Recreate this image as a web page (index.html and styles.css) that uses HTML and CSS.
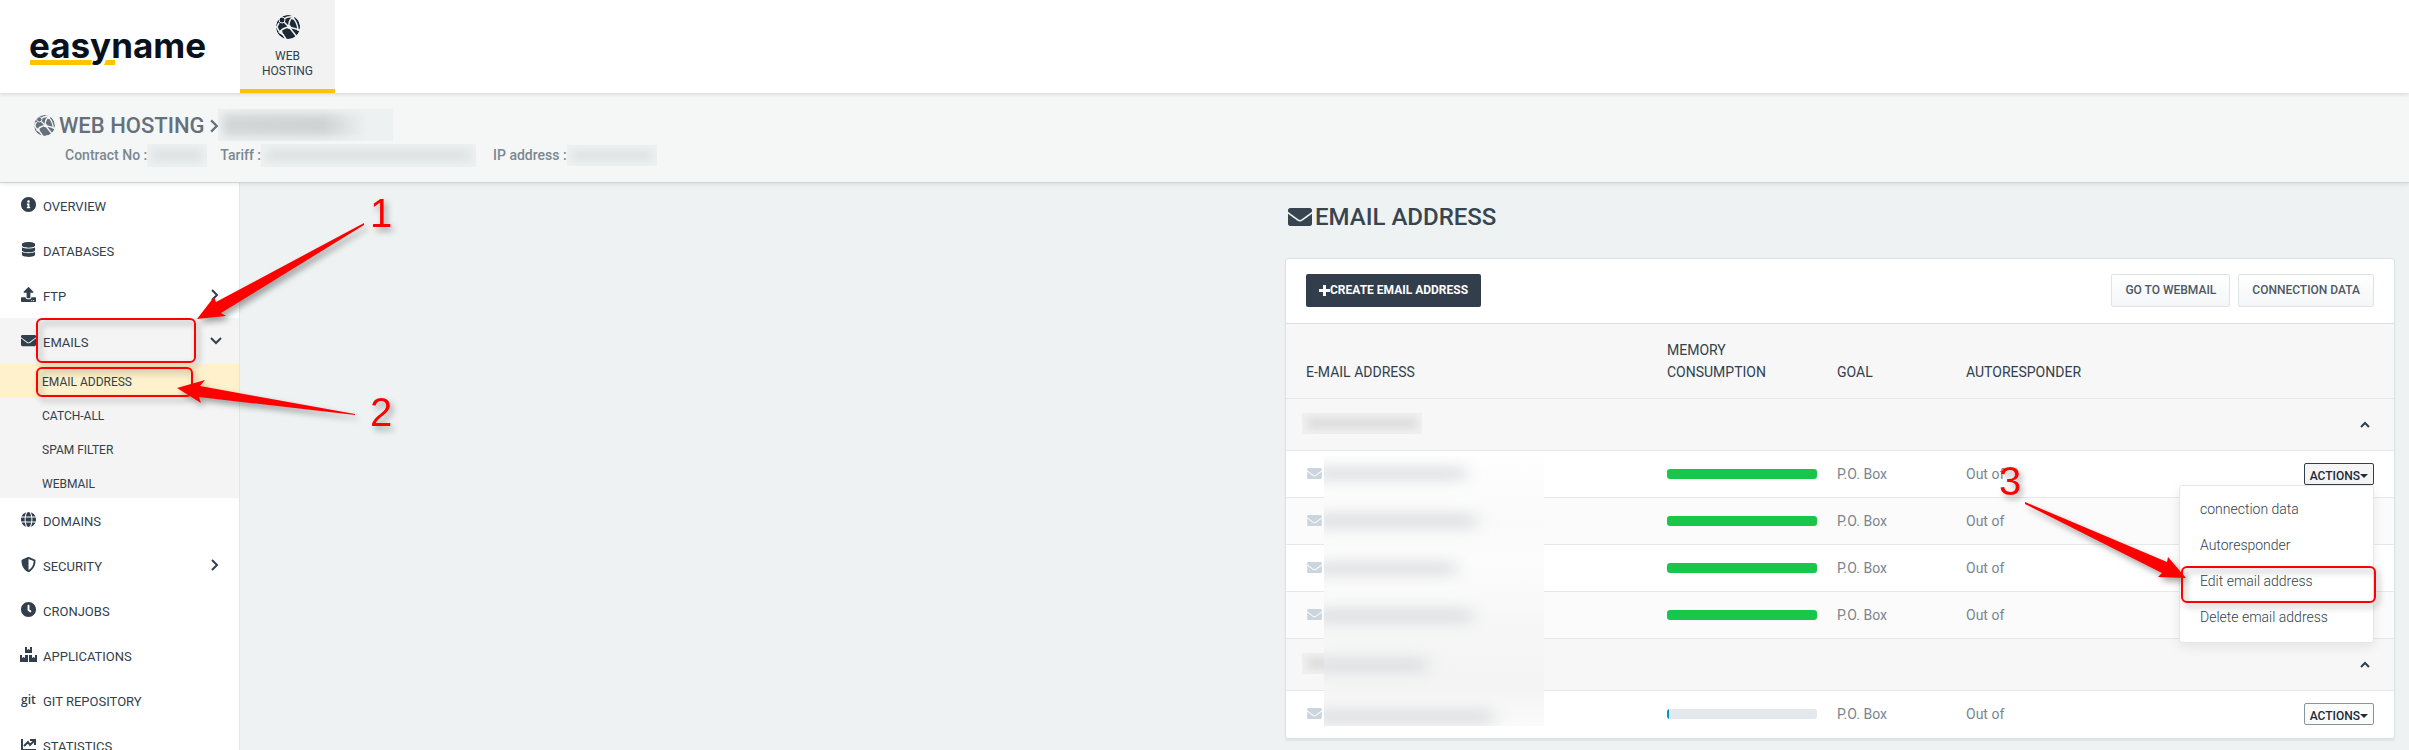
FILE: index.html
```
<!DOCTYPE html>
<html lang="en">

<head>
    <meta charset="utf-8">
    <title>Email address</title>
    <link rel="stylesheet" href="styles.css">
</head>

<body>
    <svg class="sprite" aria-hidden="true">
        <symbol id="envelope" viewBox="0 64 512 384">
            <path d="M502.3 190.8c3.9-3.1 9.7-.2 9.7 4.7V400c0 26.5-21.5 48-48 48H48c-26.5 0-48-21.5-48-48V195.6c0-5 5.7-7.8 9.7-4.7 22.4 17.4 52.1 39.5 154.1 113.6 21.1 15.4 56.7 47.8 92.2 47.6 35.7.3 72-32.8 92.3-47.6 102-74.1 131.6-96.3 154-113.7zM256 320c23.2.4 56.6-29.2 73.4-41.4 132.7-96.3 142.8-104.7 173.4-128.7 5.8-4.5 9.2-11.5 9.2-18.9v-19c0-26.5-21.5-48-48-48H48c-26.5 0-48 21.5-48 48v19c0 7.4 3.4 14.3 9.2 18.9 30.6 23.9 40.7 32.4 173.4 128.7 16.8 12.2 50.2 41.8 73.4 41.4z"/>
        </symbol>
        <symbol id="web" viewBox="0 0 24 24">
            <mask id="net">
                <circle cx="12" cy="12" r="12" fill="#fff"/>
                <path d="M8 4Q12 1 17 2M3 8L0 13M8 7L13 12M18 1Q12 5 13 12M13 12L24 15M13 12Q6 13 3 18M5 17L10 24M13 12L21 22M17 3Q22 8 22 16M1 12Q3 18 8 20" fill="none" stroke="#000" stroke-width="1.500"/>
                <circle cx="6" cy="5" r="3" fill="#fff" stroke="#000"/>
                <circle cx="17" cy="3" r="1.500" fill="#000"/>
                <circle cx="13" cy="12" r="2" fill="#000"/>
                <circle cx="5" cy="17" r="1.500" fill="#000"/>
            </mask>
            <circle cx="12" cy="12" r="12" mask="url(#net)"/>
        </symbol>
        <symbol id="chevron" viewBox="0 0 8 12">
            <path d="M1 1l5 5-5 5" fill="none" stroke="currentColor" stroke-width="2"/>
        </symbol>
        <symbol id="chevron-down" viewBox="0 0 12 8">
            <path d="M1 1l5 5 5-5" fill="none" stroke="currentColor" stroke-width="2"/>
        </symbol>
        <symbol id="chevron-up" viewBox="0 0 10 7">
            <path d="M1 6l4-4 4 4" fill="none" stroke="currentColor" stroke-width="2"/>
        </symbol>
    </svg>

    <header class="topbar">
        <a class="logo" href="#">
            <span class="logo-text">easyname</span>
            <svg class="logo-line" width="86" height="5" viewBox="0 0 86 5"><path d="M0 0h62l-1 5H0zM76 0h9v5H74z"/></svg>
        </a>
        <nav>
            <a class="tab" href="#">
                <svg width="24" height="24"><use href="#web"/></svg>
                WEB<br>HOSTING
            </a>
        </nav>
    </header>

    <section class="contract">
        <div class="contract-title">
            <svg width="21" height="21"><use href="#web"/></svg>
            <span>WEB HOSTING</span>
            <svg class="crumb" width="9" height="14"><use href="#chevron"/></svg>
            <span class="hidden-text hidden-domain"></span>
        </div>
        <div class="contract-info">
            <span>Contract No :</span><span class="hidden-text hidden-no"></span>
            <span>Tariff :</span><span class="hidden-text hidden-tariff"></span>
            <span>IP address :</span><span class="hidden-text hidden-ip"></span>
        </div>
    </section>

    <div class="page">
        <nav class="sidebar">
            <a class="item" href="#">
                <svg class="icon" viewBox="8 8 496 496"><path d="M256 8C119.043 8 8 119.083 8 256c0 136.997 111.043 248 248 248s248-111.003 248-248C504 119.083 392.957 8 256 8zm0 110c23.196 0 42 18.804 42 42s-18.804 42-42 42-42-18.804-42-42 18.804-42 42-42zm56 254c0 6.627-5.373 12-12 12h-88c-6.627 0-12-5.373-12-12v-24c0-6.627 5.373-12 12-12h12v-64h-12c-6.627 0-12-5.373-12-12v-24c0-6.627 5.373-12 12-12h64c6.627 0 12 5.373 12 12v100h12c6.627 0 12 5.373 12 12v24z"/></svg>
                <span>OVERVIEW</span>
            </a>
            <a class="item" href="#">
                <svg class="icon" viewBox="0 0 448 512"><path d="M448 73.143v45.714C448 159.143 347.667 192 224 192S0 159.143 0 118.857V73.143C0 32.857 100.333 0 224 0s224 32.857 224 73.143zM448 176v102.857C448 319.143 347.667 352 224 352S0 319.143 0 278.857V176c48.125 33.143 136.208 48.572 224 48.572S399.874 209.143 448 176zm0 160v102.857C448 479.143 347.667 512 224 512S0 479.143 0 438.857V336c48.125 33.143 136.208 48.572 224 48.572S399.874 369.143 448 336z"/></svg>
                <span>DATABASES</span>
            </a>
            <a class="item" href="#">
                <svg class="icon" viewBox="0 0 512 512"><path d="M296 384h-80c-13.3 0-24-10.7-24-24V192h-87.700c-17.800 0-26.700-21.500-14.100-34.100L242.300 5.700c7.500-7.500 19.800-7.500 27.300 0l152.200 152.200c12.600 12.600 3.700 34.100-14.100 34.100H320v168c0 13.300-10.700 24-24 24zm216-8v112c0 13.300-10.700 24-24 24H24c-13.300 0-24-10.700-24-24V376c0-13.300 10.700-24 24-24h136v8c0 30.900 25.100 56 56 56h80c30.900 0 56-25.100 56-56v-8h136c13.300 0 24 10.700 24 24zm-124 88c0-11-9-20-20-20s-20 9-20 20 9 20 20 20 20-9 20-20zm64 0c0-11-9-20-20-20s-20 9-20 20 9 20 20 20 20-9 20-20z"/></svg>
                <span>FTP</span>
                <svg class="arrow" width="8" height="12"><use href="#chevron"/></svg>
            </a>
            <div class="open">
                <a class="item" href="#">
                    <svg class="icon"><use href="#envelope"/></svg>
                    <span>EMAILS</span>
                    <svg class="arrow down" width="12" height="8"><use href="#chevron-down"/></svg>
                </a>
                <a class="subitem active" href="#">EMAIL ADDRESS</a>
                <a class="subitem" href="#">CATCH-ALL</a>
                <a class="subitem" href="#">SPAM FILTER</a>
                <a class="subitem" href="#">WEBMAIL</a>
            </div>
            <a class="item" href="#">
                <svg class="icon" viewBox="0 8 496 496"><path d="M336.500 160C322 70.700 287.800 8 248 8s-74 62.700-88.500 152h177zM152 256c0 22.200 1.200 43.500 3.300 64h185.300c2.100-20.500 3.300-41.800 3.300-64s-1.200-43.500-3.300-64H155.300c-2.100 20.500-3.300 41.800-3.300 64zm324.700-96c-28.600-67.900-86.500-120.400-158-141.600 24.400 33.800 41.200 84.700 50 141.600h108zM177.200 18.400C105.800 39.600 47.800 92.100 19.300 160h108c8.700-56.900 25.500-107.800 49.900-141.600zM487.400 192H372.700c2.100 21 3.300 42.500 3.300 64s-1.200 43-3.300 64h114.600c5.500-20.500 8.600-41.800 8.600-64s-3.100-43.500-8.500-64zM120 256c0-21.500 1.200-43 3.300-64H8.600C3.200 212.500 0 233.800 0 256s3.200 43.500 8.600 64h114.600c-2-21-3.200-42.500-3.200-64zm39.500 96c14.500 89.300 48.700 152 88.500 152s74-62.700 88.500-152h-177zm159.300 141.600c71.400-21.200 129.400-73.700 158-141.600h-108c-8.800 56.900-25.600 107.800-50 141.600zM19.300 352c28.600 67.900 86.500 120.400 158 141.600-24.400-33.800-41.200-84.700-50-141.600h-108z"/></svg>
                <span>DOMAINS</span>
            </a>
            <a class="item" href="#">
                <svg class="icon" viewBox="0 0 512 512"><path d="M466.500 83.700l-192-80a48.150 48.150 0 0 0-36.900 0l-192 80C27.700 91.100 16 108.600 16 128c0 198.500 114.500 335.700 221.500 380.300 11.800 4.900 25.100 4.900 36.900 0C360.100 472.600 496 349.300 496 128c0-19.400-11.700-36.900-29.500-44.300zM256.100 446.300l-.1-381 175.900 73.300c-3.300 151.400-82.100 261.100-175.800 307.700z"/></svg>
                <span>SECURITY</span>
                <svg class="arrow" width="8" height="12"><use href="#chevron"/></svg>
            </a>
            <a class="item" href="#">
                <svg class="icon" viewBox="8 8 496 496"><path d="M256,8C119,8,8,119,8,256S119,504,256,504,504,393,504,256,393,8,256,8Zm92.490,313h0l-20,25a16,16,0,0,1-22.490,2.500h0l-67-49.720a40,40,0,0,1-15-31.230V112a16,16,0,0,1,16-16h32a16,16,0,0,1,16,16V256l58,42.500A16,16,0,0,1,348.490,321Z"/></svg>
                <span>CRONJOBS</span>
            </a>
            <a class="item" href="#">
                <svg class="icon wide" viewBox="0 0 17 15"><path d="M5 0h2v3l1.500-1L10 3V0h2v6H5zM0 8h2v3l1.500-1L5 11V8h3v7H0zM9 8h3v3l1.500-1 1.500 1V8h2v7H9z"/></svg>
                <span>APPLICATIONS</span>
            </a>
            <a class="item" href="#">
                <span class="icon git">git</span>
                <span>GIT REPOSITORY</span>
            </a>
            <a class="item" href="#">
                <svg class="icon" viewBox="0 0 15 15"><path d="M1 2v11h14M3 9l4-4 2 3 4-4M9 3h5v5" fill="none" stroke="currentColor" stroke-width="2"/></svg>
                <span>STATISTICS</span>
            </a>
        </nav>

        <main class="content">
            <h1><svg width="24" height="18"><use href="#envelope"/></svg>EMAIL ADDRESS</h1>
            <div class="card">
                <div class="toolbar">
                    <button class="btn-dark" type="button"><svg width="11" height="11" viewBox="0 0 11 11"><path d="M4 0h3v4h4v3H7v4H4V7H0V4h4z"/></svg>CREATE EMAIL ADDRESS</button>
                    <div class="toolbar-right">
                        <button class="btn-light" type="button">GO TO WEBMAIL</button>
                        <button class="btn-light" type="button">CONNECTION DATA</button>
                    </div>
                </div>
                <table class="table">
                    <colgroup>
                        <col class="col-mail">
                        <col class="col-memory">
                        <col class="col-goal">
                        <col class="col-auto">
                        <col>
                    </colgroup>
                    <thead>
                        <tr>
                            <th scope="col">E-MAIL ADDRESS</th>
                            <th scope="col">MEMORY CONSUMPTION</th>
                            <th scope="col">GOAL</th>
                            <th scope="col">AUTORESPONDER</th>
                            <th></th>
                        </tr>
                    </thead>
                    <tbody>
                        <tr class="group">
                            <td colspan="4"><span class="hidden-text hidden-group"></span></td>
                            <td><svg class="collapse" width="10" height="7"><use href="#chevron-up"/></svg></td>
                        </tr>
                        <tr>
                            <td><svg class="mail" width="15" height="11"><use href="#envelope"/></svg></td>
                            <td><div class="bar"><div class="bar-fill" style="width: 100%"></div></div></td>
                            <td>P.O. Box</td>
                            <td>Out of</td>
                            <td>
                                <div class="dropdown">
                                    <button class="btn-actions focus" type="button">ACTIONS<svg width="8" height="4" viewBox="0 0 8 4"><path d="M0 0h8L4 4z"/></svg></button>
                                    <div class="menu">
                                        <a href="#">connection data</a>
                                        <a href="#">Autoresponder</a>
                                        <a href="#">Edit email address</a>
                                        <a href="#">Delete email address</a>
                                    </div>
                                </div>
                            </td>
                        </tr>
                        <tr class="even">
                            <td><svg class="mail" width="15" height="11"><use href="#envelope"/></svg></td>
                            <td><div class="bar"><div class="bar-fill" style="width: 100%"></div></div></td>
                            <td>P.O. Box</td>
                            <td>Out of</td>
                            <td></td>
                        </tr>
                        <tr>
                            <td><svg class="mail" width="15" height="11"><use href="#envelope"/></svg></td>
                            <td><div class="bar"><div class="bar-fill" style="width: 100%"></div></div></td>
                            <td>P.O. Box</td>
                            <td>Out of</td>
                            <td></td>
                        </tr>
                        <tr class="even">
                            <td><svg class="mail" width="15" height="11"><use href="#envelope"/></svg></td>
                            <td><div class="bar"><div class="bar-fill" style="width: 100%"></div></div></td>
                            <td>P.O. Box</td>
                            <td>Out of</td>
                            <td></td>
                        </tr>
                        <tr class="group">
                            <td colspan="4"><span class="hidden-text hidden-group"></span></td>
                            <td><svg class="collapse" width="10" height="7"><use href="#chevron-up"/></svg></td>
                        </tr>
                        <tr>
                            <td><svg class="mail" width="15" height="11"><use href="#envelope"/></svg></td>
                            <td><div class="bar"><div class="bar-fill low" style="width: 1%"></div></div></td>
                            <td>P.O. Box</td>
                            <td>Out of</td>
                            <td><button class="btn-actions" type="button">ACTIONS<svg width="8" height="4" viewBox="0 0 8 4"><path d="M0 0h8L4 4z"/></svg></button></td>
                        </tr>
                    </tbody>
                </table>
                <!-- blurred addresses -->
                <svg class="mask" width="220" height="270">
                    <filter id="soft" x="-20%" y="-100%" width="140%" height="300%"><feGaussianBlur stdDeviation="9 7"/></filter>
                    <g filter="url(#soft)">
                        <rect x="-12" y="11" width="154" height="13"/>
                        <rect x="-12" y="58" width="164" height="14"/>
                        <rect x="-12" y="106" width="144" height="13"/>
                        <rect x="-12" y="153" width="160" height="14"/>
                        <rect x="-12" y="202" width="115" height="14"/>
                        <rect x="-12" y="254" width="182" height="14"/>
                    </g>
                </svg>
            </div>
        </main>
    </div>

    <!-- step markers -->
    <svg class="steps" width="2409" height="750" viewBox="0 0 2409 750">
        <g fill="none" stroke="#f00" stroke-width="2">
            <rect x="37" y="319" width="158" height="43" rx="5"/>
            <rect x="37" y="368" width="155" height="28" rx="5"/>
            <rect x="2182" y="567" width="193" height="35" rx="5"/>
        </g>
        <g fill="#f00">
            <path d="M197 319L214 297 216 302 364 223 364 225 221 313 226 316z"/>
            <path d="M177 388L205 380 200 386 355 414 355 415 199 397 201 403z"/>
            <path d="M2186 578L2168 557 2167 562 2025 502 2025 504 2162 573 2158 577z"/>
            <text x="370" y="227">1</text>
            <text x="370" y="426">2</text>
            <text x="1999" y="495">3</text>
        </g>
    </svg>
</body>

</html>
```
FILE: styles.css
```
* {
    box-sizing: border-box;
}

body {
    margin: 0;
    height: 100vh;
    overflow: hidden;
    display: flex;
    flex-direction: column;
    font-family: Roboto, "Liberation Sans", sans-serif;
    font-size: 14px;
    color: #323f4c;
    background: #eef2f3;
}

a {
    color: inherit;
    text-decoration: none;
}

svg {
    fill: currentColor;
    flex-shrink: 0;
}

.sprite {
    position: absolute;
    width: 0;
    height: 0;
}

.topbar {
    display: flex;
    flex-shrink: 0;
    height: 93px;
    background: #fff;
    box-shadow: 0 1px 4px rgba(0, 0, 0, 0.15);
    z-index: 2;
}

.logo {
    width: 240px;
    padding: 22px 0 0 29px;
    color: #08111c;
}

.logo-text {
    display: block;
    height: 38px;
    font-family: Inter, sans-serif;
    font-size: 35px;
    line-height: 46px;
    font-weight: 700;
}

.logo-line {
    display: block;
    margin-left: 1px;
    color: #ffc400;
}

.tab {
    display: block;
    width: 95px;
    height: 93px;
    padding-top: 15px;
    border-bottom: 4px solid #ffc400;
    background: #f2f2f2;
    font-size: 12px;
    line-height: 15px;
    text-align: center;
}

.tab svg {
    display: block;
    margin: 0 auto 10px;
    color: #1b2936;
}

.contract {
    flex-shrink: 0;
    height: 90px;
    padding: 16px 34px 0;
    background: #f5f7f7;
    border-bottom: 1px solid #cbd4da;
    box-shadow: 0 1px 4px rgba(0, 0, 0, 0.1);
    color: #66707b;
    font-weight: 500;
    z-index: 1;
}

.contract-title {
    display: flex;
    align-items: center;
    height: 32px;
    gap: 4px;
    font-size: 22px;
}

.crumb {
    margin: 2px -5px 0 2px;
}

.contract-info {
    display: flex;
    align-items: center;
    height: 22px;
    margin: 3px 0 0 31px;
    color: #7b8791;
}

.hidden-text {
    display: inline-block;
    background: #dfe3e4;
    box-shadow: inset 0 0 8px 5px #eef1f1;
}

.hidden-domain {
    width: 175px;
    height: 32px;
    background: linear-gradient(90deg, #d3d7d8, #d0d3d4 60%, #eef1f1 85%);
}

.hidden-no {
    width: 60px;
    height: 23px;
    margin-right: 13px;
}

.hidden-tariff {
    width: 215px;
    height: 23px;
    margin-right: 17px;
}

.hidden-ip {
    width: 90px;
    height: 21px;
}

.page {
    display: flex;
    flex: 1;
    min-height: 0;
}

.sidebar {
    flex-shrink: 0;
    width: 240px;
    background: #fff;
    border-right: 1px solid #e2e6e8;
}

.item {
    display: flex;
    align-items: center;
    height: 45px;
    padding: 2px 20px 0 21px;
    font-size: 13px;
}

.icon {
    width: 15px;
    height: 15px;
    margin: 0 7px 4px 0;
}

.icon.wide {
    width: 17px;
    margin: 0 6px 4px -1px;
}

.git {
    font: 600 12px/15px "Open Sans", sans-serif;
}

.arrow {
    margin: 0 0 4px auto;
}

.arrow.down {
    margin-right: -3px;
}

.open {
    padding-top: 1px;
    background: #f4f4f4;
}

.subitem {
    display: block;
    height: 34px;
    padding-left: 42px;
    font-size: 12px;
    line-height: 36px;
}

.subitem:last-child {
    height: 32px;
}

.active {
    background: #fff1cb;
}

.content {
    flex: 1;
    max-width: 1138px;
    margin-left: auto;
    padding: 0 14px;
}

h1 {
    display: flex;
    align-items: center;
    gap: 3px;
    height: 67px;
    margin: 0 0 8px;
    padding: 0 3px;
    font-size: 24px;
    font-weight: 500;
    color: #36454f;
}

.card {
    position: relative;
    background: #fff;
    border: 1px solid #dbe2e5;
    border-radius: 3px;
    box-shadow: 0 2px 2px rgba(0, 0, 0, 0.06);
}

.toolbar {
    display: flex;
    align-items: center;
    justify-content: space-between;
    height: 64px;
    padding: 0 20px 2px;
}

.toolbar-right {
    display: flex;
    gap: 8px;
}

button {
    font-family: inherit;
    cursor: pointer;
}

.btn-dark {
    display: flex;
    align-items: center;
    height: 33px;
    padding: 0 13px;
    border: 0;
    border-radius: 2px;
    background: #323e4c;
    color: #fff;
    font-size: 12px;
    font-weight: 700;
}

.btn-light {
    height: 33px;
    padding: 0 13px;
    border: 1px solid #dfe3e5;
    border-radius: 2px;
    background: linear-gradient(#fff, #f3f6f7);
    color: #4d5864;
    font-size: 12px;
    font-weight: 500;
}

.table {
    width: 100%;
    table-layout: fixed;
    border-collapse: collapse;
    border-top: 1px solid #d5dfe0;
}

.col-mail {
    width: 381px;
}

.col-memory {
    width: 170px;
}

.col-goal {
    width: 129px;
}

.col-auto {
    width: 150px;
}

.table th {
    height: 75px;
    padding: 15px 20px 15px 0;
    background: #f7f7f7;
    font-weight: 400;
    line-height: 22px;
    text-align: left;
    vertical-align: bottom;
}

.table th:first-child,
.table td:first-child {
    padding-left: 20px;
}

.table td {
    height: 47px;
    padding: 0 20px 0 0;
    border-top: 1px solid #e6e9ea;
    color: #7b858f;
}

.table td:last-child {
    text-align: right;
}

.even td {
    background: #fbfbfb;
}

.table .group td {
    height: 52px;
    padding-bottom: 2px;
    background: #f7f7f7;
}

.table .group td:first-child {
    padding-left: 16px;
}

.group .collapse {
    margin-right: 4px;
    vertical-align: middle;
    color: #323f4c;
}

.hidden-group {
    width: 120px;
    height: 21px;
    vertical-align: middle;
    background: #dcdcdc;
    box-shadow: inset 0 0 8px 5px #f1f1f1;
}

.mail {
    margin-left: 1px;
    color: #cbd5dd;
}

.bar {
    width: 150px;
    height: 10px;
    border-radius: 3px;
    background: #e2e8eb;
    overflow: hidden;
}

.bar-fill {
    height: 10px;
    background: #18c64a;
}

.low {
    background: #0099c3;
}

.dropdown {
    position: relative;
}

.btn-actions {
    display: inline-flex;
    align-items: center;
    height: 22px;
    padding: 3px 5px 0;
    border: 1px solid #8a939c;
    border-radius: 2px;
    background: #fafbfb;
    color: #1f2b38;
    font-size: 12px;
    font-weight: 500;
    vertical-align: middle;
}

.focus {
    border-color: #323f4c;
    background: #f5f5f5;
}

.menu {
    position: absolute;
    top: 100%;
    right: 0;
    z-index: 3;
    width: 195px;
    padding: 5px 0 7px;
    background: #fff;
    border: 1px solid #e3e7e9;
    border-radius: 3px;
    box-shadow: 0 4px 12px rgba(0, 0, 0, 0.08);
    text-align: left;
}

.menu a {
    display: block;
    padding: 0 20px;
    font-weight: 300;
    line-height: 36px;
    color: #323f4c;
}

.mask {
    position: absolute;
    left: 38px;
    top: 197px;
    background: linear-gradient(#fefefe, #fafafa 25%, #fcfcfc 40%, #f6f6f6 65%, #f4f4f4 85%, #fafafa);
    fill: #dcdee1;
}

.steps {
    position: absolute;
    top: 0;
    left: 0;
    z-index: 5;
    pointer-events: none;
    filter: drop-shadow(3px 4px 3px rgba(0, 0, 0, 0.35));
    font-family: "Liberation Sans", Arial, sans-serif;
    font-size: 40px;
}
```
